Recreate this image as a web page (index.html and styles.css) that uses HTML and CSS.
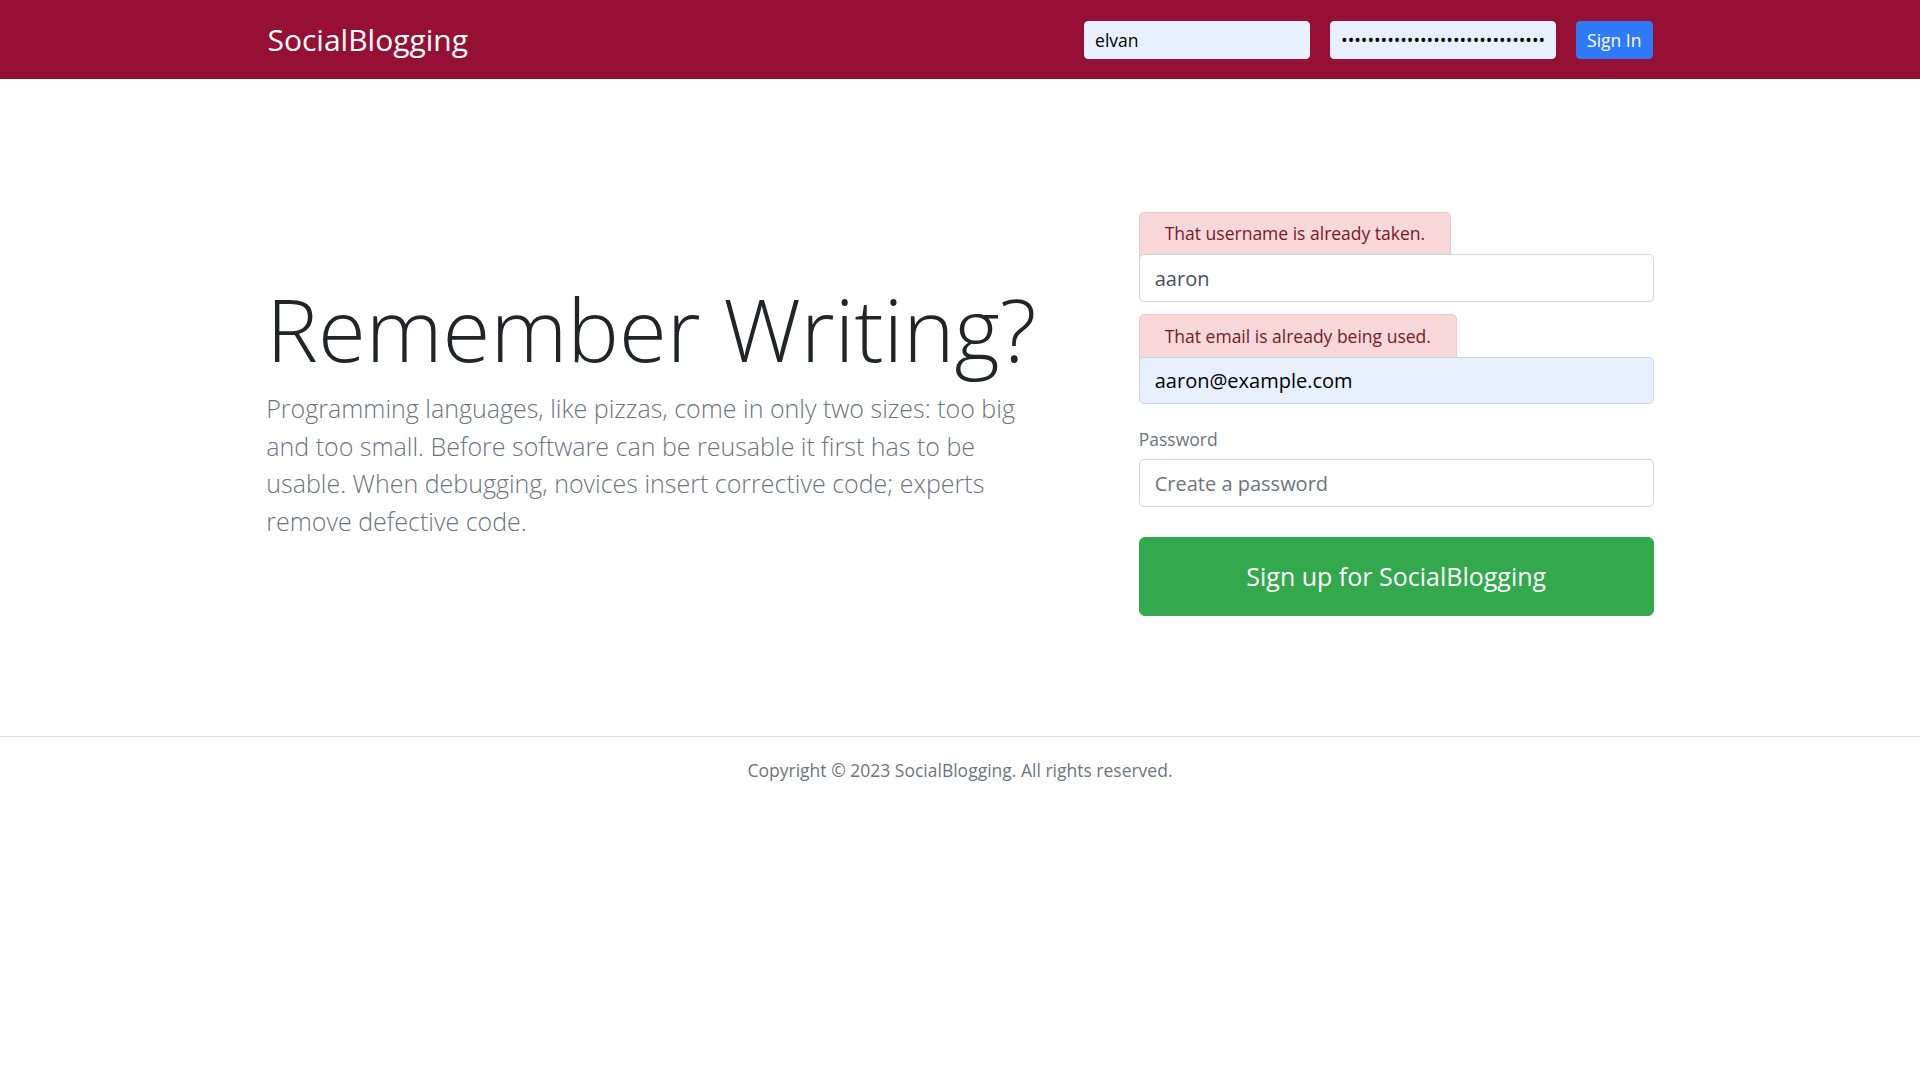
FILE: index.html
```html
<!DOCTYPE html>
<html lang="en">
<head>
<meta charset="utf-8">
<title>SocialBlogging</title>
<link rel="stylesheet" href="styles.css">
</head>
<body>
<header class="header-bar">
  <div class="header-inner">
    <h4 class="brand"><a href="#" class="brand-link">SocialBlogging</a></h4>
    <form class="login-form">
      <input class="nav-input" type="text" name="username" value="elvan">
      <input class="nav-input nav-input-gap" type="password" name="password" value="elvanelvanelvanelvanelvanelvanelvanelvan">
      <button type="button" class="btn-signin">Sign In</button>
    </form>
  </div>
</header>

<main class="container">
  <div class="row">
    <div class="col-intro">
      <h1 class="display">Remember Writing?</h1>
      <p class="lead">Programming languages, like pizzas, come in only two sizes: too big and too small. Before software can be reusable it first has to be usable. When debugging, novices insert corrective code; experts remove defective code.</p>
    </div>
    <div class="col-form">
      <form class="register-form">
        <div class="form-group">
          <label class="field-label" aria-label="Username"></label>
          <input class="form-control" type="text" value="aaron">
          <div class="alert-msg">That username is already taken.</div>
        </div>
        <div class="form-group">
          <label class="field-label" aria-label="Email"></label>
          <input class="form-control form-control-filled" type="text" value="aaron@example.com">
          <div class="alert-msg">That email is already being used.</div>
        </div>
        <div class="form-group form-group-last">
          <label class="field-label"><small>Password</small></label>
          <input class="form-control" type="password" placeholder="Create a password">
        </div>
        <button type="button" class="btn-signup">Sign up for SocialBlogging</button>
      </form>
    </div>
  </div>
</main>

<footer class="site-footer">
  <p class="footer-text">Copyright &copy; 2023 <a href="#" class="footer-link">SocialBlogging</a>. All rights reserved.</p>
</footer>
</body>
</html>
```
FILE: styles.css
```css
*, *::before, *::after { box-sizing: border-box; }

html { font-size: 20px; }

body {
  margin: 0;
  font-family: "Open Sans", "Noto Sans", sans-serif;
  font-size: 1rem;
  line-height: 1.5;
  color: #212529;
  background: #fff;
}

/* Header */
.header-bar {
  background: #961036;
  margin-bottom: 1rem;
}
.header-inner {
  max-width: 1425px;
  margin: 0 auto;
  padding: 20.6px 1rem;
  display: flex;
  align-items: center;
}
.brand {
  margin: 0 auto 0 0;
  font-size: 1.5rem;
  font-weight: 400;
  line-height: 1.2;
}
.brand-link {
  color: #fff;
  text-decoration: none;
}
.login-form {
  display: flex;
  align-items: center;
  margin: 0;
}
.nav-input {
  width: 226px;
  height: 38.25px;
  padding: 5px 10px;
  font-family: "Open Sans", sans-serif;
  font-size: 0.875rem;
  line-height: 1.5;
  color: #000;
  background: #e8f0fe;
  border: 1px solid #e8f0fe;
  border-radius: 4px;
  outline: none;
}
.nav-input-gap { margin-left: 20px; }
.btn-signin {
  margin-left: 20px;
  padding: 5px 10px;
  font-family: "Open Sans", sans-serif;
  font-size: 0.875rem;
  line-height: 1.5;
  color: #fff;
  background: #2f7af6;
  border: 1px solid #2f7af6;
  border-radius: 4px;
}

/* Main */
.container {
  max-width: 1425px;
  margin: 0 auto;
  padding: 3rem 18.75px;
}
.row {
  display: flex;
  align-items: center;
  margin: 0 -18.75px;
}
.col-intro {
  flex: 0 0 58.3333%;
  max-width: 58.3333%;
  padding: 3rem 18.75px;
}
.col-form {
  flex: 0 0 41.6667%;
  max-width: 41.6667%;
  padding: 3rem 18.75px 3rem 3rem;
}
.display {
  margin: 0 0 0.5rem;
  font-size: 87px;
  font-weight: 300;
  line-height: 1.2;
  color: #212529;
  white-space: nowrap;
}
.lead {
  margin: 0 0 1rem;
  font-size: 1.25rem;
  font-weight: 300;
  line-height: 1.5;
  color: #6c757d;
}

.register-form { margin: 0; }
.form-group {
  position: relative;
  margin-bottom: 1rem;
}
.form-group-last { margin-bottom: 0; }
.field-label {
  display: block;
  height: 30px;
  margin-bottom: 0.25rem;
  color: #6c757d;
}
.field-label small { font-size: 0.875em; font-weight: 400; }
.form-control {
  position: relative;
  z-index: 2;
  display: block;
  width: 100%;
  height: 47.5px;
  padding: 7.5px 15px;
  font-family: "Open Sans", sans-serif;
  font-size: 1rem;
  line-height: 1.5;
  color: #495057;
  background: #fff;
  border: 1px solid #ced4da;
  border-radius: 5px;
  outline: none;
}
.form-control::placeholder { color: #6c757d; opacity: 1; }
.form-control-filled {
  background: #e8f0fe;
  color: #000;
}
.alert-msg {
  position: absolute;
  top: -7.5px;
  left: 0;
  z-index: 1;
  padding: 7.5px 25px 20px;
  font-size: 17.5px;
  line-height: 1.5;
  white-space: nowrap;
  color: #721c24;
  background: #f8d7da;
  border: 1px solid #f5c6cb;
  border-radius: 5px;
}
.btn-signup {
  display: block;
  width: 100%;
  margin-top: 1.5rem;
  padding: 1rem;
  font-family: "Open Sans", sans-serif;
  font-size: 1.25rem;
  line-height: 1.5;
  color: #fff;
  background: #34a84c;
  border: 1px solid #34a84c;
  border-radius: 6px;
}

/* Footer */
.site-footer {
  border-top: 1px solid #dee2e6;
  text-align: center;
  font-size: 17.5px;
  color: #6c757d;
  padding: 1rem 0;
}
.footer-text { margin: 0; }
.footer-link { color: #6c757d; text-decoration: none; }
```
